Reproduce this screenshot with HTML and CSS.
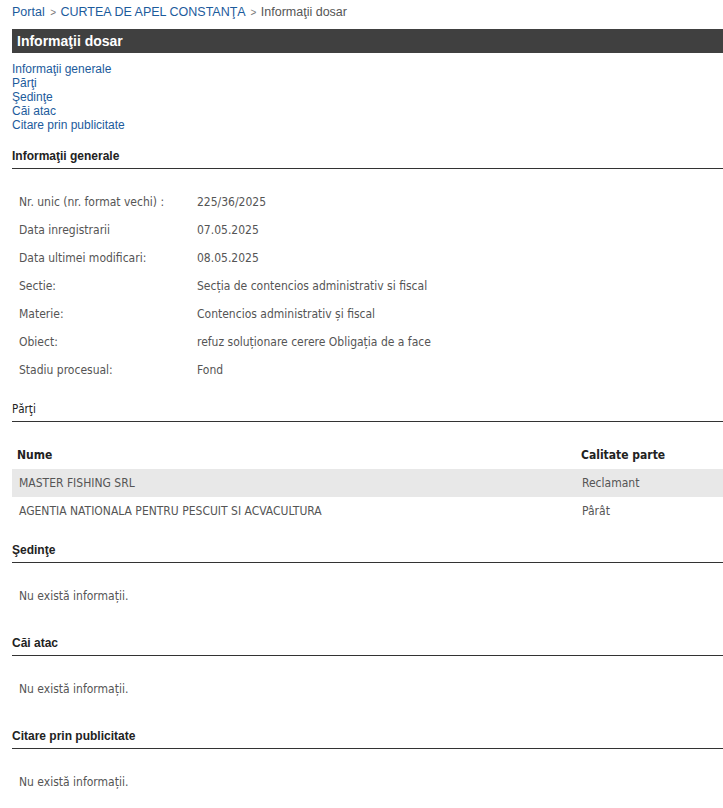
FILE: index.html
```html
<!DOCTYPE html>
<html lang="ro">
<head>
  <meta charset="UTF-8" />
  <title>Informaţii dosar</title>
  <link rel="stylesheet" href="styles.css">
</head>
<body>
  <div class="breadcrumb">
    <a href="#">Portal</a> <span class="sep">&gt;</span> <a href="#">CURTEA DE APEL CONSTANŢA</a> <span class="sep">&gt;</span> <span class="current">Informaţii dosar</span>
  </div>

  <div class="title-bar">Informaţii dosar</div>

  <div class="toc">
    <a href="#generale">Informaţii generale</a>
    <a href="#parti">Părţi</a>
    <a href="#sedinte">Şedinţe</a>
    <a href="#cai">Căi atac</a>
    <a href="#citare">Citare prin publicitate</a>
  </div>

  <h3 class="section-title" id="generale">Informaţii generale</h3>
  <table class="info">
    <tr><td class="label">Nr. unic (nr. format vechi) :</td><td>225/36/2025</td></tr>
    <tr><td class="label">Data inregistrarii</td><td>07.05.2025</td></tr>
    <tr><td class="label">Data ultimei modificari:</td><td>08.05.2025</td></tr>
    <tr><td class="label">Sectie:</td><td>Secția de contencios administrativ si fiscal</td></tr>
    <tr><td class="label">Materie:</td><td>Contencios administrativ și fiscal</td></tr>
    <tr><td class="label">Obiect:</td><td>refuz soluționare cerere Obligația de a face</td></tr>
    <tr><td class="label">Stadiu procesual:</td><td>Fond</td></tr>
  </table>

  <h3 class="section-title narrow" id="parti">Părţi</h3>
  <table class="parti">
    <tr><th>Nume</th><th class="calitate">Calitate parte</th></tr>
    <tr class="odd"><td>MASTER FISHING SRL</td><td>Reclamant</td></tr>
    <tr><td>AGENTIA NATIONALA PENTRU PESCUIT SI ACVACULTURA</td><td>Pârât</td></tr>
  </table>

  <h3 class="section-title" id="sedinte">Şedinţe</h3>
  <p class="empty">Nu există informații.</p>

  <h3 class="section-title" id="cai">Căi atac</h3>
  <p class="empty">Nu există informații.</p>

  <h3 class="section-title" id="citare">Citare prin publicitate</h3>
  <p class="empty">Nu există informații.</p>
</body>
</html>
```

FILE: styles.css
```css
body {
  margin: 0;
  padding: 0 0 0 12px;
  font-family: 'Liberation Sans', Arial, sans-serif;
  font-size: 12px;
  color: #333;
  background: #fff;
}

a {
  color: #1c5b9c;
  text-decoration: none;
}

.breadcrumb {
  height: 29px;
  line-height: 14px;
  padding-top: 5px;
  box-sizing: border-box;
  font-size: 12.5px;
  color: #555;
}

.breadcrumb .sep {
  color: #777;
  font-size: 10px;
  margin: 0 1px 0 2px;
}

.title-bar {
  height: 24px;
  line-height: 24px;
  background: #404040;
  color: #fff;
  font-weight: bold;
  font-size: 14px;
  padding-left: 5px;
}

.toc {
  display: flex;
  flex-direction: column;
  align-items: flex-start;
  margin-top: 9px;
  margin-bottom: -1px;
  line-height: 14px;
  font-size: 12px;
}

.section-title {
  margin: 17px 0 0 0;
  font-size: 12px;
  font-weight: bold;
  line-height: 16px;
  padding-bottom: 4px;
  border-bottom: 1px solid #333;
  color: #222;
}

.section-title.narrow {
  font-family: 'DejaVu Sans Condensed', Tahoma, sans-serif;
  font-weight: normal;
  font-size: 11.5px;
}

table {
  border-collapse: collapse;
  width: 100%;
  margin-top: 19px;
  font-family: 'DejaVu Sans Condensed', Tahoma, sans-serif;
  font-size: 12px;
  color: #555;
}

td, th {
  height: 28px;
  padding: 0 0 0 7px;
  text-align: left;
  vertical-align: middle;
}

.info td.label {
  width: 171px;
}

.parti th {
  padding-left: 5px;
  font-weight: bold;
  color: #222;
}

.parti th.calitate {
  width: 142px;
}

.parti tr.odd {
  background: #e8e8e8;
}

.parti td:last-child {
  padding-left: 6px;
}

.empty {
  margin: 19px 0 25px 0;
  padding-left: 7px;
  line-height: 28px;
  font-family: 'DejaVu Sans Condensed', Tahoma, sans-serif;
  font-size: 12px;
  color: #555;
}

.empty + .section-title {
  margin-top: 0;
}
```
